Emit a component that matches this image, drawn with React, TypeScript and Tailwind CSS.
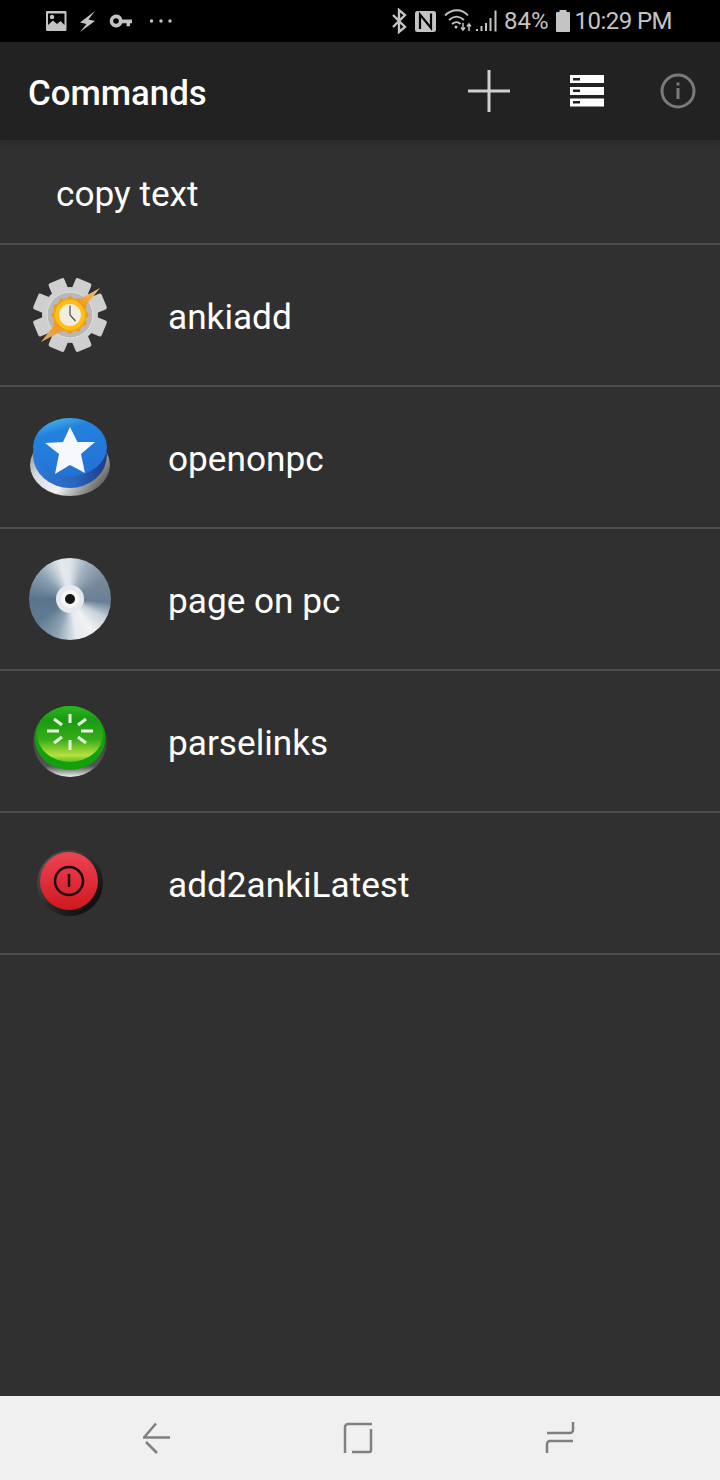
import React from "react";

function StatusLeft() {
  return (
    <div className="flex items-center">
      <svg width="128" height="34" viewBox="45 4 128 34" className="ml-[45px]" fill="#c4c4c4">
        <path fillRule="evenodd" d="M47 11h18.500a1.200 1.200 0 0 1 1 1v18a1.200 1.200 0 0 1-1 1H47a1.200 1.200 0 0 1-1-1V12a1.200 1.200 0 0 1 1-1zm1 2.500V25l5-4.500 4 3.500 3.500-3 4 4V13.500z" />
        <circle cx="52" cy="17" r="2.200" />
        <path d="M95 11 L80 22.500 L86.500 24 L80 32 L95 21 L88.500 19.500 Z" />
        <path fillRule="evenodd" d="M116 14.500a6.500 6.500 0 0 1 6.300 5H132v3.800h-2v3h-3.500v-3h-4.200a6.500 6.500 0 1 1-6.300-8.800zm0 3.700a2.800 2.800 0 1 0 0 5.600 2.800 2.800 0 0 0 0-5.600z" />
        <circle cx="151.500" cy="21" r="1.700" />
        <circle cx="161" cy="21" r="1.700" />
        <circle cx="170" cy="21" r="1.700" />
      </svg>
    </div>
  );
}

function StatusRight() {
  return (
    <div className="flex items-center">
      <svg width="18" height="26" viewBox="391 8 18 26" fill="none" stroke="#c4c4c4" strokeWidth="2.400">
        <path d="M394 15l12 12-6 5V10l6 5-12 12" />
      </svg>
      <svg width="22" height="24" viewBox="416 9 22 24" className="ml-[7px]">
        <rect x="416" y="11" width="21" height="21" rx="2.500" fill="#c4c4c4" />
        <path d="M421 29V14.500L432 28V13.500" fill="none" stroke="#000" strokeWidth="2.200" />
      </svg>
      <svg width="54" height="26" viewBox="444 8 54 26" fill="none" stroke="#c4c4c4" strokeWidth="1.800" className="ml-[6px]">
        <path d="M446 15.500c7-7 17-7 23 0M450 20c5-4.500 10-4.500 15 0M453 24c3-2.500 6-2.500 8.500 0" />
        <circle cx="457" cy="27" r="1.500" fill="#c4c4c4" stroke="none" />
        <path d="M464 23v7M462 27.500l2 2.500 2-2.500" strokeWidth="1.500" />
        <path d="M470 31v-7M468 26.500l2-2.500 2 2.500" strokeWidth="1.500" />
        <path d="M478 31v-2M482.500 31v-5M487 31v-8M491.500 31v-13M496.500 31.500V10.500" strokeWidth="2" />
      </svg>
      <span className="ml-[7px] text-[24px] leading-[30px] text-[#c4c4c4]">84%</span>
      <svg width="14" height="22" viewBox="0 0 14 22" className="ml-[7px]" fill="#c4c4c4">
        <rect x="3.500" y="0" width="7" height="2.500" />
        <rect x="0" y="2" width="14" height="20" rx="1" />
      </svg>
      <span className="ml-[5px] mr-[48px] text-[24px] leading-[30px] tracking-[-0.55px] text-[#c4c4c4]">10:29 PM</span>
    </div>
  );
}

function GearIcon() {
  const teeth = [0, 45, 90, 135, 180, 225, 270, 315];
  const burst = Array.from({ length: 24 }, (_, i) => {
    const r = i % 2 === 0 ? 19 : 16.500;
    const a = (i * 15 * Math.PI) / 180;
    return `${(40 + r * Math.cos(a)).toFixed(1)},${(40 + r * Math.sin(a)).toFixed(1)}`;
  }).join(" ");
  return (
    <svg width="80" height="80" viewBox="0 0 80 80">
      <defs>
        <radialGradient id="sun" cx="0.5" cy="0.5" r="0.5">
          <stop offset="0.55" stopColor="#ffc820" />
          <stop offset="1" stopColor="#f08c10" />
        </radialGradient>
        <linearGradient id="bolt" x1="0" y1="1" x2="1" y2="0">
          <stop offset="0" stopColor="#d8b078" />
          <stop offset="0.3" stopColor="#f09a20" />
          <stop offset="0.7" stopColor="#f09a20" />
          <stop offset="1" stopColor="#e8c88c" />
        </linearGradient>
      </defs>
      {teeth.map((a) => (
        <rect key={a} x="31.500" y="3" width="17" height="16" rx="2" fill="#cfcfcf" transform={`rotate(${a + 22.5} 40 40)`} />
      ))}
      <circle cx="40" cy="40" r="28" fill="#cfcfcf" />
      <circle cx="40" cy="40" r="23" fill="#b8b8b8" stroke="#e2e2e2" strokeWidth="1" />
      <polygon points={burst} fill="url(#sun)" />
      <path d="M70 13 L50 24 L40 40 L26 48 L11 67 L30 57 L48 46 L56 30 Z" fill="url(#bolt)" />
      <circle cx="40" cy="40" r="15" fill="#ffbe18" />
      <circle cx="40" cy="40" r="11" fill="#f3ede0" />
      <path d="M40 30.500V40l5.500 6" fill="none" stroke="#555" strokeWidth="1.300" />
    </svg>
  );
}

function StarIcon() {
  return (
    <svg width="84" height="84" viewBox="0 0 84 84">
      <defs>
        <linearGradient id="ring" x1="0" y1="0" x2="1" y2="0.6">
          <stop offset="0" stopColor="#6c7278" />
          <stop offset="0.35" stopColor="#d8dce0" />
          <stop offset="0.65" stopColor="#f2f2f2" />
          <stop offset="1" stopColor="#6a6a6a" />
        </linearGradient>
        <linearGradient id="side" x1="0" y1="0" x2="1" y2="0">
          <stop offset="0" stopColor="#2b7ad6" />
          <stop offset="0.55" stopColor="#2a66c0" />
          <stop offset="1" stopColor="#1c3c8c" />
        </linearGradient>
        <linearGradient id="topb" x1="0.2" y1="0" x2="0.55" y2="1">
          <stop offset="0" stopColor="#48b8ea" />
          <stop offset="0.25" stopColor="#2382de" />
          <stop offset="1" stopColor="#2272d6" />
        </linearGradient>
      </defs>
      <ellipse cx="42" cy="50" rx="40" ry="31" fill="url(#ring)" />
      <ellipse cx="42" cy="40" rx="37" ry="33" fill="url(#side)" />
      <ellipse cx="42" cy="32" rx="37" ry="29" fill="url(#topb)" />
      <path d="M42 12 L49.500 27 L67 27 L53 39 L57 58 L42 50 L27 59 L31 39 L17 28 L35 27 Z" fill="#f6f8fb" />
    </svg>
  );
}

function DiscIcon() {
  return (
    <div className="flex h-[82px] w-[82px] items-center justify-center rounded-full bg-[conic-gradient(#dfe5ea_0deg,#9fb0bf_25deg,#76889a_60deg,#6a7f94_95deg,#c8d2da_118deg,#f0f3f5_145deg,#e6ebef_170deg,#8ea2b4_200deg,#5f7a92_235deg,#5a748c_270deg,#8aa0b3_310deg,#e4e9ee_345deg,#dfe5ea_360deg)]">
      <div className="flex h-[28px] w-[28px] items-center justify-center rounded-full bg-[#e6e9eb]">
        <div className="flex h-[18px] w-[18px] items-center justify-center rounded-full bg-[#f6f6f6]">
          <div className="h-[10px] w-[10px] rounded-full bg-[#161616]" />
        </div>
      </div>
    </div>
  );
}

function GreenIcon() {
  const spokes: [number, number, number, number][] = [
    [38, 9, 38, 18],
    [38, 35, 38, 45],
    [15, 26, 27, 26],
    [49, 26, 61, 26],
    [22, 14, 30, 20],
    [46, 20, 54, 14],
    [22, 38, 30, 32],
    [46, 32, 54, 38],
  ];
  return (
    <svg width="76" height="72" viewBox="0 0 76 72">
      <defs>
        <linearGradient id="gring" x1="0" y1="0" x2="0" y2="1">
          <stop offset="0" stopColor="#2c2c2c" />
          <stop offset="0.85" stopColor="#555" />
          <stop offset="1" stopColor="#f0f0f0" />
        </linearGradient>
        <linearGradient id="gtop" x1="0" y1="0" x2="0" y2="1">
          <stop offset="0" stopColor="#2db520" />
          <stop offset="0.25" stopColor="#1a9a12" />
          <stop offset="0.6" stopColor="#35ad18" />
          <stop offset="0.88" stopColor="#b8e040" />
          <stop offset="1" stopColor="#5cc020" />
        </linearGradient>
      </defs>
      <ellipse cx="38" cy="36" rx="37" ry="36" fill="url(#gring)" />
      <ellipse cx="38" cy="33" rx="35.500" ry="32" fill="#14a00c" />
      <ellipse cx="38" cy="29" rx="33" ry="28" fill="url(#gtop)" />
      {spokes.map((s, i) => (
        <line key={i} x1={s[0]} y1={s[1]} x2={s[2]} y2={s[3]} stroke="#eaf6e0" strokeWidth="3" />
      ))}
    </svg>
  );
}

function RedIcon() {
  return (
    <svg width="66" height="66" viewBox="0 0 66 66">
      <defs>
        <linearGradient id="rtop" x1="0" y1="0" x2="0" y2="1">
          <stop offset="0" stopColor="#ec4454" />
          <stop offset="1" stopColor="#d0181e" />
        </linearGradient>
        <linearGradient id="rrim" x1="0" y1="0" x2="1" y2="1">
          <stop offset="0" stopColor="#5c5c5c" />
          <stop offset="0.5" stopColor="#2a2a2a" />
          <stop offset="1" stopColor="#050505" />
        </linearGradient>
      </defs>
      <circle cx="33" cy="33" r="33" fill="url(#rrim)" />
      <circle cx="32" cy="31" r="29" fill="url(#rtop)" />
      <circle cx="32" cy="31" r="14" fill="none" stroke="#1e0608" strokeWidth="2.500" />
      <path d="M32 24v13" stroke="#1e0608" strokeWidth="2.500" />
    </svg>
  );
}

const rows: [string, React.ReactNode][] = [
  ["ankiadd", <GearIcon />],
  ["openonpc", <StarIcon />],
  ["page on pc", <DiscIcon />],
  ["parselinks", <GreenIcon />],
  ["add2ankiLatest", <RedIcon />],
];

export default function App() {
  return (
    <div className="flex h-[1480px] w-[720px] flex-col overflow-hidden bg-[#303030] font-['Roboto',sans-serif]">
      <div className="flex h-[42px] items-center justify-between bg-black">
        <StatusLeft />
        <StatusRight />
      </div>

      <div className="flex h-[98px] items-center bg-[#222222] pl-[28px] shadow-[0_3px_5px_rgba(0,0,0,0.12)]">
        <span className="mt-[4px] flex-1 text-[34.8px] font-medium text-white">Commands</span>
        <svg width="42" height="42" viewBox="0 0 42 42" className="mr-[60px]">
          <path d="M21 0v42M0 21h42" stroke="#d0d0d0" strokeWidth="3" />
        </svg>
        <svg width="34" height="32" viewBox="0 0 34 32" className="mr-[56px]">
          <rect width="34" height="8" fill="#fff" />
          <rect y="12" width="34" height="8" fill="#fff" />
          <rect y="23.500" width="34" height="8" fill="#fff" />
          <rect x="3" y="3" width="7" height="2.500" fill="#222" />
          <rect x="3" y="14.500" width="7" height="2.500" fill="#222" />
          <rect x="3" y="26" width="7" height="2.500" fill="#222" />
        </svg>
        <svg width="36" height="36" viewBox="0 0 36 36" className="mr-[24px]">
          <circle cx="18" cy="18" r="16" fill="none" stroke="#7a7a7a" strokeWidth="3" />
          <rect x="16.500" y="15" width="3" height="11" fill="#7a7a7a" />
          <rect x="16.500" y="9.500" width="3" height="3" fill="#7a7a7a" />
        </svg>
      </div>

      <div className="flex flex-1 flex-col">
        <div className="flex h-[105px] items-center border-b-2 border-[#4c4c4c] pl-[56px]">
          <span className="mt-[5px] text-[35.2px] text-white">copy text</span>
        </div>
        {rows.map(([label, icon]) => (
          <div key={label} className="flex h-[142px] items-center border-b-2 border-[#4c4c4c]">
            <div className="flex w-[140px] justify-center">{icon}</div>
            <span className="ml-[28px] mt-[4px] text-[35.2px] text-white">{label}</span>
          </div>
        ))}
      </div>

      <div className="flex h-[84px] items-center bg-[#f0f0f0] pl-[142px]">
        <svg width="30" height="32" viewBox="0 0 30 32" fill="none" stroke="#808080" strokeWidth="2.500">
          <path d="M14 1.500 2 15.500M28 15.500H1M4 20l11 11" />
        </svg>
        <svg width="30" height="32" viewBox="0 0 30 32" fill="none" stroke="#808080" strokeWidth="2.500" className="ml-[171px]">
          <path d="M2 31V5a3 3 0 0 1 3-3h24M28 7v21a2 2 0 0 1-2 2H9" />
        </svg>
        <svg width="30" height="32" viewBox="0 0 30 32" fill="none" stroke="#808080" strokeWidth="2.500" className="ml-[172px]">
          <path d="M28 0v8a3 3 0 0 1-3 3H2M28 19H5a3 3 0 0 0-3 3v9" />
        </svg>
      </div>
    </div>
  );
}
